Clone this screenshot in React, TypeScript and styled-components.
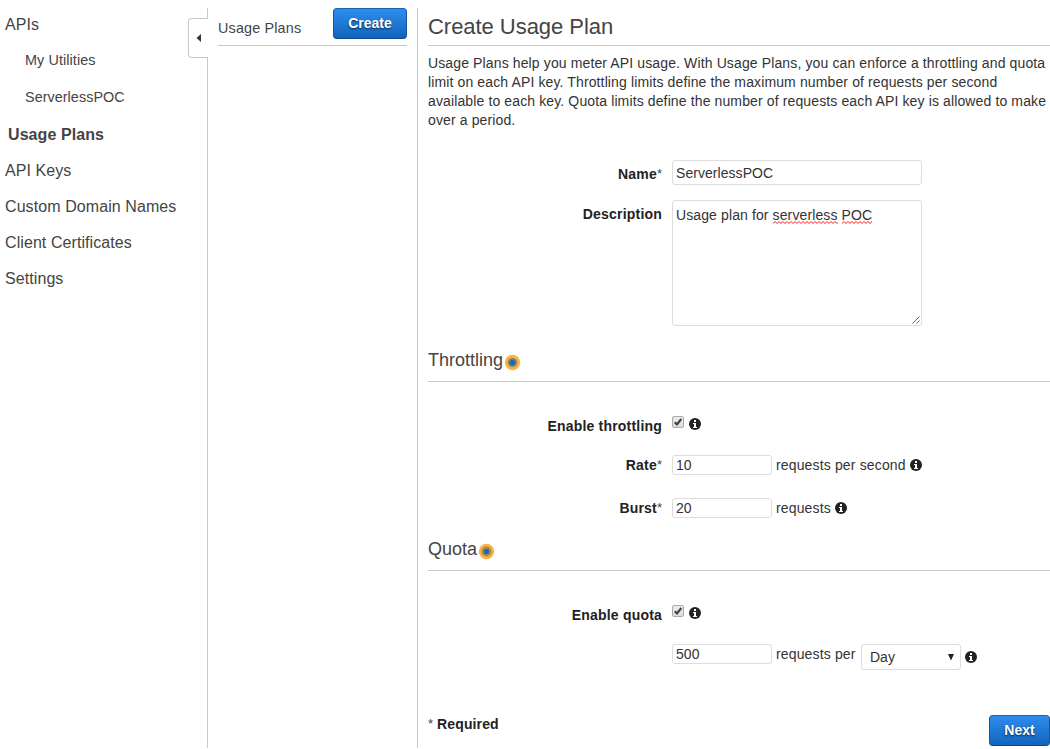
import React from 'react';
import styled, { createGlobalStyle } from 'styled-components';

const Global = createGlobalStyle`
  *, *::before, *::after { box-sizing: border-box; }
  body {
    margin: 0;
    background: #fff;
    color: #222;
    font: 14px/19px "Liberation Sans", Arial, Helvetica, sans-serif;
    overflow: hidden;
  }
`;

const Page = styled.div`
  display: flex;
  width: 1050px;
  height: 748px;
  padding-top: 8px;
`;

const Sidebar = styled.nav`
  position: relative;
  width: 208px;
  flex: none;
  border-right: 1px solid #c8c8c8;
`;

const NavList = styled.ul`
  list-style: none;
  margin: 0;
  padding: 0;
`;

const NavItem = styled.li<{ $level?: number; $active?: boolean }>`
  height: 36px;
  line-height: ${p => (p.$level ? 36 : 38)}px;
  white-space: nowrap;
  color: #444;
  padding-left: ${p => (p.$level ? 25 : p.$active ? 8 : 5)}px;
  font-size: ${p => (p.$level ? 14.4 : 16)}px;
  font-weight: ${p => (p.$active ? 700 : 400)};
  letter-spacing: 0.08px;
  &:first-child { height: 34px; line-height: 34px; }
  &:nth-child(3) { height: 38px; line-height: 38px; letter-spacing: 0.04px; }
`;

const CollapseTab = styled.button`
  position: absolute;
  top: 10px;
  right: -1px;
  width: 20px;
  height: 40px;
  padding: 0;
  display: flex;
  align-items: center;
  justify-content: center;
  background: #fff;
  border: 1px solid #c8c8c8;
  border-right: 0;
  border-radius: 4px 0 0 4px;
`;

const PlanColumn = styled.section`
  width: 210px;
  flex: none;
  padding: 0 10px;
  border-right: 1px solid #c8c8c8;
`;

const PlanHeader = styled.header`
  display: flex;
  justify-content: space-between;
  height: 38px;
  border-bottom: 1px solid #c8c8c8;
`;

const PlanTitle = styled.h2`
  margin: 0;
  font-size: 14.4px;
  font-weight: 400;
  line-height: 41px;
  letter-spacing: 0.15px;
  color: #444;
`;

const Button = styled.button<{ $width: number }>`
  width: ${p => p.$width}px;
  height: 31px;
  padding: 0 0 1px;
  border: 1px solid #14549c;
  border-color: #1b62b0 #14549c #104682;
  border-radius: 4px;
  background: linear-gradient(#2e8ded, #1264bd);
  color: #fff;
  font: bold 14px "Liberation Sans", Arial, sans-serif;
  text-shadow: 0 1px 2px rgba(0, 0, 0, 0.7);
`;

const Main = styled.main`
  flex: 1;
  min-width: 0;
  padding-left: 10px;
`;

const Title = styled.h1`
  margin: 0;
  height: 38px;
  border-bottom: 1px solid #c8c8c8;
  font-size: 22px;
  font-weight: 400;
  line-height: 37px;
  letter-spacing: -0.04px;
  color: #444;
`;

const Intro = styled.p`
  margin: 8px 0 0;
  height: 106px;
  white-space: nowrap;
  letter-spacing: 0.125px;
  color: #333;
`;

const SectionTitle = styled.h2`
  display: flex;
  align-items: flex-start;
  margin: 0;
  height: 43px;
  border-bottom: 1px solid #c8c8c8;
  padding-top: 11px;
  font-size: 18px;
  font-weight: 400;
  line-height: 20px;
  color: #444;
`;

const Dot = styled.svg`
  margin: 4px 0 0 1px;
`;

const Row = styled.div<{ $height: number }>`
  display: flex;
  height: ${p => p.$height}px;
`;

const Label = styled.label<{ $top: number }>`
  width: 234px;
  margin-right: 10px;
  padding-top: ${p => p.$top}px;
  flex: none;
  text-align: right;
  font-weight: 700;
  letter-spacing: 0.2px;
`;

const Star = styled.span`
  font-size: 13px;
  line-height: 1;
  vertical-align: 1px;
  font-weight: 400;
  letter-spacing: 0;
  color: #444;
`;

const Input = styled.input<{ $wide?: boolean }>`
  width: ${p => (p.$wide ? 250 : 100)}px;
  height: ${p => (p.$wide ? 25 : 20)}px;
  padding: 0 3px;
  border: 1px solid #ddd;
  border-radius: 3px;
  background: #fff;
  color: #333;
  font: 14px "Liberation Sans", Arial, sans-serif;
  letter-spacing: 0.05px;
  outline: 0;
`;

const DescriptionBox = styled.div`
  position: relative;
  width: 250px;
  height: 126px;
  padding: 5px 3px;
  border: 1px solid #ddd;
  border-radius: 3px;
  color: #333;
  letter-spacing: 0.11px;
`;

const Misspelled = styled.span`
  position: relative;
`;

const Squiggle = styled.svg`
  position: absolute;
  left: 0;
  bottom: -1px;
  width: 100%;
  height: 3px;
`;

const Grip = styled.svg`
  position: absolute;
  right: 1px;
  bottom: 1px;
`;

const Unit = styled.span<{ $width: number }>`
  width: ${p => p.$width}px;
  margin-left: 4px;
  white-space: nowrap;
  line-height: 20px;
  letter-spacing: 0.15px;
  color: #333;
`;

const Toggle = styled.div`
  display: flex;
  align-items: flex-start;
  gap: 5px;
  padding-top: 34px;
`;

const InfoMark = styled.svg<{ $top: number }>`
  margin-top: ${p => p.$top}px;
`;

const Select = styled.div`
  display: flex;
  align-items: center;
  justify-content: space-between;
  width: 100px;
  height: 26px;
  margin-right: 4px;
  padding: 0 5px 0 8px;
  border: 1px solid #ddd;
  border-radius: 3px;
  color: #333;
`;

const Footer = styled.footer`
  display: flex;
  justify-content: space-between;
`;

const Required = styled.strong`
  letter-spacing: 0.12px;
`;

const Info = ({ top }: { top: number }) => (
  <InfoMark $top={top} width="12" height="12" viewBox="0 0 12 12">
    <circle cx="6" cy="6" r="6" fill="#222" />
    <path d="M5 2h2v2H5zM4 5h3v4h1v1H4V9h1V6H4z" fill="#fff" />
  </InfoMark>
);

const Beacon = ({ core, tone }: { core: number; tone: string }) => (
  <Dot width="17" height="17" viewBox="0 0 17 17">
    <circle cx="8.5" cy="8.5" r="7.7" fill="#fdb044" />
    <circle cx="8.5" cy="8.5" r={core} fill={tone} />
    <circle cx="8.5" cy="8.5" r="2.6" fill="#1968b3" />
  </Dot>
);

const Checkbox = () => (
  <svg width="12" height="12" viewBox="0 0 12 12">
    <defs>
      <linearGradient id="face" x1="0" y1="0" x2="0" y2="1">
        <stop offset="0" stopColor="#eee" />
        <stop offset="1" stopColor="#dcdcdc" />
      </linearGradient>
    </defs>
    <rect x="0.5" y="0.5" width="11" height="11" rx="1.5" fill="url(#face)" stroke="#aaa" />
    <path d="M2.8 6.2L5 8.4 9.3 3" fill="none" stroke="#404040" strokeWidth="2.1" />
  </svg>
);

const Marked = ({ children, id }: { children: string; id: string }) => (
  <Misspelled>
    {children}
    <Squiggle>
      <defs>
        <pattern id={id} width="4" height="3" patternUnits="userSpaceOnUse">
          <path d="M-1 1.5L0 2.5L2 0.5L4 2.5L5 1.5" fill="none" stroke="#f00" strokeWidth="0.9" />
        </pattern>
      </defs>
      <rect width="100%" height="3" fill={`url(#${id})`} />
    </Squiggle>
  </Misspelled>
);

export default function App() {
  return (
    <>
      <Global />
      <Page>
        <Sidebar>
          <NavList>
            <NavItem>APIs</NavItem>
            <NavItem $level={1}>My Utilities</NavItem>
            <NavItem $level={1}>ServerlessPOC</NavItem>
            <NavItem $active>Usage Plans</NavItem>
            <NavItem>API Keys</NavItem>
            <NavItem>Custom Domain Names</NavItem>
            <NavItem>Client Certificates</NavItem>
            <NavItem>Settings</NavItem>
          </NavList>
          <CollapseTab aria-label="Collapse">
            <svg width="5" height="8" viewBox="0 0 5 8"><path d="M5 0v8L0.5 4z" fill="#333" /></svg>
          </CollapseTab>
        </Sidebar>
        <PlanColumn>
          <PlanHeader>
            <PlanTitle>Usage Plans</PlanTitle>
            <Button $width={74}>Create</Button>
          </PlanHeader>
        </PlanColumn>
        <Main>
          <Title>Create Usage Plan</Title>
          <Intro>
            Usage Plans help you meter API usage. With Usage Plans, you can enforce a throttling and quota<br />
            limit on each API key. Throttling limits define the maximum number of requests per second<br />
            available to each key. Quota limits define the number of requests each API key is allowed to make<br />
            over a period.
          </Intro>
          <Row $height={40}>
            <Label $top={5}>Name<Star>*</Star></Label>
            <Input $wide defaultValue="ServerlessPOC" />
          </Row>
          <Row $height={139}>
            <Label $top={5}>Description</Label>
            <DescriptionBox>
              Usage plan for <Marked id="wave-a">serverless</Marked> <Marked id="wave-b">POC</Marked>
              <Grip width="8" height="8" viewBox="0 0 8 8">
                <path d="M0.5 7.5l7-7M4.5 7.5l3-3" stroke="#555" strokeWidth="0.9" />
              </Grip>
            </DescriptionBox>
          </Row>
          <SectionTitle>Throttling<Beacon core={4.6} tone="#80805a" /></SectionTitle>
          <Row $height={73}>
            <Label $top={35}>Enable throttling</Label>
            <Toggle><Checkbox /><Info top={2} /></Toggle>
          </Row>
          <Row $height={43}>
            <Label $top={1}>Rate<Star>*</Star></Label>
            <Input defaultValue="10" />
            <Unit $width={134}>requests per second</Unit><Info top={4} />
          </Row>
          <Row $height={30}>
            <Label $top={1}>Burst<Star>*</Star></Label>
            <Input defaultValue="20" />
            <Unit $width={59}>requests</Unit><Info top={4} />
          </Row>
          <SectionTitle>Quota<Beacon core={4.9} tone="#a78a3d" /></SectionTitle>
          <Row $height={73}>
            <Label $top={35}>Enable quota</Label>
            <Toggle><Checkbox /><Info top={2} /></Toggle>
          </Row>
          <Row $height={71}>
            <Label $top={0} />
            <Input defaultValue="500" />
            <Unit $width={85}>requests per</Unit>
            <Select>Day
              <svg width="8" height="7" viewBox="0 0 8 7"><path d="M1 0h6L4 6.5z" fill="#222" /></svg>
            </Select>
            <Info top={7} />
          </Row>
          <Footer>
            <Required><Star>*</Star> Required</Required>
            <Button $width={61}>Next</Button>
          </Footer>
        </Main>
      </Page>
    </>
  );
}
